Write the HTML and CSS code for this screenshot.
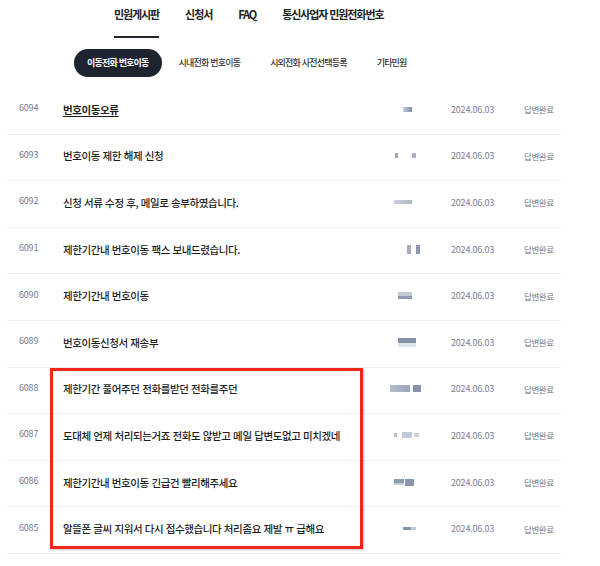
FILE: index.html
```html
<!DOCTYPE html>
<html lang="ko">
<head>
<meta charset="utf-8">
<title>민원게시판</title>
<link rel="stylesheet" href="styles.css">
</head>
<body>
<nav class="top-nav">
  <a class="top-item active">민원게시판</a>
  <a class="top-item">신청서</a>
  <a class="top-item">FAQ</a>
  <a class="top-item">통신사업자 민원전화번호</a>
</nav>
<div class="sub-nav">
  <a class="sub-item active">이동전화 번호이동</a>
  <a class="sub-item">시내전화 번호이동</a>
  <a class="sub-item">시외전화 사전선택등록</a>
  <a class="sub-item">기타민원</a>
</div>
<div class="board">
  <div class="row"><span class="num">6094</span><span class="title link">번호이동오류</span><span class="name"><i class="blur" style="margin-left:23px;width:9px;height:5px;background:linear-gradient(90deg,#c6cddb,#7f8ca6)"></i></span><span class="date">2024.06.03</span><span class="status">답변완료</span></div>
  <div class="row"><span class="num">6093</span><span class="title">번호이동 제한 해제 신청</span><span class="name"><i class="blur" style="margin-left:15px;width:3px;height:5px;background:#9ea8bc"></i><i class="blur" style="margin-left:14px;width:4px;height:5px;background:#aab3c5"></i></span><span class="date">2024.06.03</span><span class="status">답변완료</span></div>
  <div class="row"><span class="num">6092</span><span class="title">신청 서류 수정 후, 메일로 송부하였습니다.</span><span class="name"><i class="blur" style="margin-left:14px;width:18px;height:4px;background:linear-gradient(90deg,#c9cfdb,#aeb7c8)"></i></span><span class="date">2024.06.03</span><span class="status">답변완료</span></div>
  <div class="row"><span class="num">6091</span><span class="title">제한기간내 번호이동 팩스 보내드렸습니다.</span><span class="name"><i class="blur" style="margin-left:27px;width:4px;height:9px;background:#a3adc0"></i><i class="blur" style="margin-left:5px;width:4px;height:9px;background:#8b97ad"></i></span><span class="date">2024.06.03</span><span class="status">답변완료</span></div>
  <div class="row"><span class="num">6090</span><span class="title">제한기간내 번호이동</span><span class="name"><i class="blur" style="margin-left:18px;width:14px;height:7px;background:linear-gradient(0deg,#8f9ab0 40%,#c3cad8 40%)"></i></span><span class="date">2024.06.03</span><span class="status">답변완료</span></div>
  <div class="row"><span class="num">6089</span><span class="title">번호이동신청서 재송부</span><span class="name"><i class="blur" style="margin-left:18px;width:18px;height:9px;background:linear-gradient(0deg,#dfe3ea 45%,#8591a8 45%)"></i></span><span class="date">2024.06.03</span><span class="status">답변완료</span></div>
  <div class="row"><span class="num">6088</span><span class="title">제한기간 풀어주던 전화를받던 전화를주던</span><span class="name"><i class="blur" style="margin-left:10px;width:20px;height:7px;background:linear-gradient(90deg,#b5bdcc,#9aa5b9)"></i><i class="blur" style="margin-left:3px;width:8px;height:7px;background:#8793aa"></i></span><span class="date">2024.06.03</span><span class="status">답변완료</span></div>
  <div class="row"><span class="num">6087</span><span class="title">도대체 언제 처리되는거죠 전화도 않받고 메일 답변도없고 미치겠네</span><span class="name"><i class="blur" style="margin-left:14px;width:3px;height:4px;background:#b8c0ce"></i><i class="blur" style="margin-left:5px;width:10px;height:6px;background:#c2c9d6"></i><i class="blur" style="margin-left:2px;width:5px;height:4px;background:#ccd2dd"></i></span><span class="date">2024.06.03</span><span class="status">답변완료</span></div>
  <div class="row"><span class="num">6086</span><span class="title">제한기간내 번호이동 긴급건 빨리해주세요</span><span class="name"><i class="blur" style="margin-left:14px;width:10px;height:6px;background:linear-gradient(0deg,#c8cfdb 40%,#8e9ab0 40%)"></i><i class="blur" style="margin-left:1px;width:9px;height:7px;background:#8995ac"></i></span><span class="date">2024.06.03</span><span class="status">답변완료</span></div>
  <div class="row"><span class="num">6085</span><span class="title">알뜰폰 글씨 지워서 다시 접수했습니다 처리좀요 제발 ㅠ 급해요</span><span class="name"><i class="blur" style="margin-left:23px;width:13px;height:3px;background:linear-gradient(90deg,#8793aa 60%,#c2c9d6 60%)"></i></span><span class="date">2024.06.03</span><span class="status">답변완료</span></div>
  <div class="highlight"></div>
</div>
</body>
</html>
```

FILE: styles.css
```css
* { box-sizing: border-box; }

body {
  margin: 0;
  background: #ffffff;
  font-family: "Noto Sans CJK KR", "Noto Sans", sans-serif;
  color: #222222;
}

.top-nav {
  display: flex;
  gap: 26px;
  padding-left: 114px;
  height: 38px;
}

.top-item {
  display: block;
  padding-top: 6px;
  height: 38px;
  font-size: 11px;
  line-height: 17px;
  font-weight: 700;
  letter-spacing: -1.1px;
  color: #222222;
  border-bottom: 2px solid transparent;
}

.top-item.active {
  border-bottom-color: #232732;
}

.sub-nav {
  display: flex;
  gap: 4px;
  padding-left: 74px;
  margin-top: 11px;
}

.sub-item {
  display: block;
  height: 28px;
  padding: 0 13px;
  border-radius: 14px;
  font-size: 9px;
  line-height: 28px;
  letter-spacing: -0.8px;
  font-weight: 500;
  color: #333333;
  white-space: nowrap;
}

.sub-item.active {
  background: #1e2330;
  color: #ffffff;
  font-weight: 700;
}

.board {
  position: relative;
  margin: 11px 0 0 7px;
  width: 554px;
}

.row {
  display: flex;
  align-items: center;
  height: 46.6px;
  padding-left: 12px;
  padding-bottom: 3px;
  border-bottom: 1px solid #efeff1;
}

.num {
  width: 44px;
  flex: none;
  font-size: 9px;
  letter-spacing: -0.2px;
  color: #6f7b92;
  margin-top: -3px;
}

.title {
  width: 317px;
  flex: none;
  font-size: 10.5px;
  letter-spacing: -0.4px;
  font-weight: 500;
  color: #1d1d1f;
  white-space: nowrap;
}

.title.link {
  text-decoration: underline;
  text-underline-offset: 2px;
  font-weight: 700;
}

.name {
  width: 60px;
  flex: none;
  display: flex;
  align-items: center;
}

.blur {
  display: block;
  flex: none;
}

.date {
  width: 73px;
  margin-left: 11px;
  flex: none;
  font-size: 9px;
  letter-spacing: -0.2px;
  color: #7a8194;
}

.status {
  flex: none;
  font-size: 8.5px;
  letter-spacing: -0.4px;
  color: #6e7587;
}

.highlight {
  position: absolute;
  left: 43px;
  top: 280px;
  width: 313px;
  height: 181px;
  border: 3px solid #f0261b;
  box-shadow: 1px 1px 2px rgba(0, 0, 0, 0.25);
  pointer-events: none;
}
```
